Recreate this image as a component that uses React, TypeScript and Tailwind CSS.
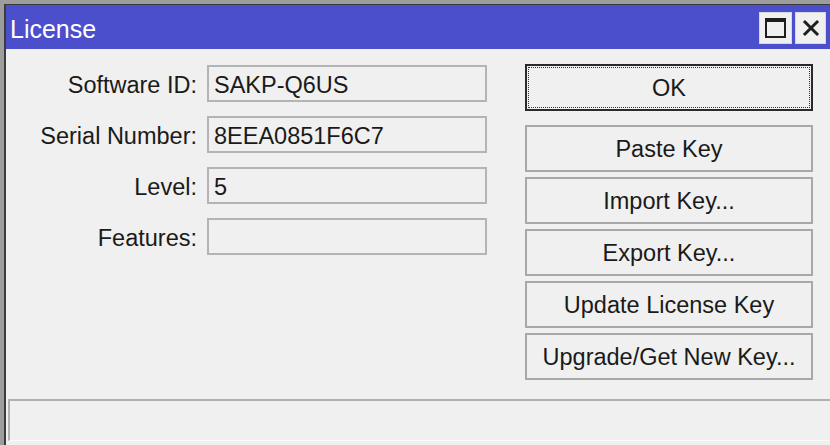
import React from "react";

const fields = [
  { label: "Software ID:", value: "SAKP-Q6US" },
  { label: "Serial Number:", value: "8EEA0851F6C7" },
  { label: "Level:", value: "5" },
  { label: "Features:", value: "" },
];

const buttons = ["Paste Key", "Import Key...", "Export Key...", "Update License Key", "Upgrade/Get New Key..."];

export default function App() {
  return (
    <div
      className="w-[830px] h-[445px] overflow-hidden bg-[#9d9d9d] pt-[4px] pl-[4px] text-[#1a1a1a]"
      style={{ fontFamily: '"Liberation Sans", Arial, sans-serif' }}
    >
      <div className="flex h-full flex-col border-l-2 border-t border-[#3c3c3c] bg-[#f0f0f0]">
        {/* title bar */}
        <div className="flex h-[44px] items-center justify-between bg-[#4c4fcc] pl-[4px] pr-[4px]">
          <span className="pt-[6px] text-[25px] text-white">License</span>
          <div className="flex gap-[3px] pt-[2px]">
            <div className="flex h-[32px] w-[33px] items-center justify-center border border-[#d8d8d8] bg-[#f0f0f0]">
              <div className="h-[20px] w-[21px] border-2 border-t-[4px] border-[#1e1e1e]" />
            </div>
            <div className="flex h-[32px] w-[31px] items-center justify-center border border-[#d8d8d8] bg-[#f0f0f0]">
              <svg width="18" height="18" viewBox="0 0 18 18">
                <path d="M3 3 L15 15 M15 3 L3 15" stroke="#1e1e1e" strokeWidth="3" strokeLinecap="square" />
              </svg>
            </div>
          </div>
        </div>

        {/* body */}
        <div className="flex flex-1 pt-[15px]">
          <div className="flex flex-col gap-[14px] pt-[1px]">
            {fields.map((f) => (
              <div key={f.label} className="flex h-[37px] items-center">
                <div className="flex h-[37px] w-[201px] items-center justify-end pr-[10px] pt-[3px] text-[23.5px] leading-[28px]">
                  {f.label}
                </div>
                <div className="flex h-[37px] w-[280px] items-center border-2 border-[#b4b4b4] bg-[#f0f0f0] px-[5px] pt-[2px] text-[23.5px] leading-[28px]">
                  {f.value}
                </div>
              </div>
            ))}
          </div>
          <div className="ml-[38px] flex flex-col">
            <div className="flex h-[47px] w-[288px] items-center justify-center border-2 border-[#2a2a2a] p-[1px]">
              <div className="flex h-full w-full items-center justify-center border border-dotted border-[#333] pt-[2px] text-[23.5px]">
                OK
              </div>
            </div>
            <div className="mt-[14px] flex flex-col gap-[5px]">
              {buttons.map((b) => (
                <div
                  key={b}
                  className="flex h-[47px] w-[288px] items-center justify-center border-2 border-[#a8a8a8] pt-[3px] text-[23.5px]"
                >
                  {b}
                </div>
              ))}
            </div>
          </div>
        </div>

        {/* status bar */}
        <div className="ml-[2px] mb-[4px] h-[42px] border-l-2 border-t-2 border-[#b0b0b0] border-b border-b-[#fafafa]" />
      </div>
    </div>
  );
}
